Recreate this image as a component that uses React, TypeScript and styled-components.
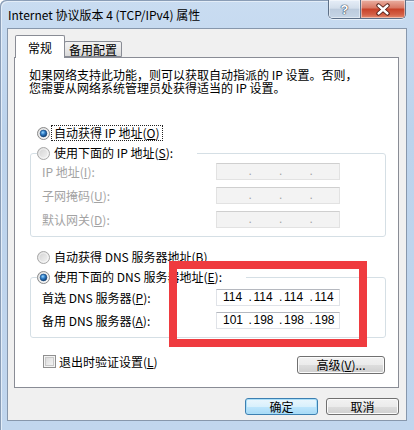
import { FC, ReactNode, useId } from "react";
import styled, { createGlobalStyle } from "styled-components";

const GlobalStyle = createGlobalStyle`
  * { box-sizing: border-box; }
  html, body { margin: 0; padding: 0; background: #ffffff; }
  body {
    font-family: "Noto Sans CJK SC", "Liberation Sans", sans-serif;
    font-size: 12px;
    color: #000;
  }
`;

const Window = styled.div`
  position: relative;
  width: 414px;
  height: 430px;
  display: flex;
  flex-direction: column;
  padding: 0 7px 9px 7px;
  background: linear-gradient(180deg, #c9dcf1 0%, #bcd3ec 30%, #c1d6ee 100%);
  border-top-left-radius: 6px;
  box-shadow: inset 1px 1px 0 #8a9db6, inset 2px 2px 0 #e3edf8;
  overflow: hidden;
`;

const TitleBar = styled.div`
  height: 28px;
  display: flex;
  align-items: flex-start;
`;

const Title = styled.div`
  padding: 7px 0 0 1px;
  line-height: 16px;
  font-size: 12px;
  color: #000;
`;

const Controls = styled.div`
  margin-left: auto;
  margin-right: 1px;
  display: flex;
  height: 19px;
  border: 1px solid #5d6f87;
  border-top: none;
  border-radius: 0 0 5px 5px;
  overflow: hidden;
  box-shadow: 0 1px 0 rgba(255, 255, 255, 0.6);
`;

const CtrlButton = styled.div<{ $kind: "help" | "close" }>`
  width: ${(p) => (p.$kind === "close" ? 45 : 31)}px;
  display: flex;
  align-items: center;
  justify-content: center;
  background: ${(p) =>
    p.$kind === "close"
      ? "linear-gradient(180deg, #eab0a2 0%, #d97a66 42%, #c8432a 52%, #d35f45 80%, #e48a6e 100%)"
      : "linear-gradient(180deg, #e6eef8 0%, #d3deeb 45%, #bccbdd 52%, #c6d5e6 100%)"};
  box-shadow: inset 0 0 0 1px rgba(255, 255, 255, 0.45);
  & + & {
    border-left: 1px solid #5d6f87;
  }
`;

const HelpGlyph = styled.span`
  font-family: "Liberation Sans", sans-serif;
  font-weight: bold;
  font-size: 13px;
  line-height: 13px;
  color: #ffffff;
  text-shadow: 0 0 1px #2f3f55, 0 0 1px #2f3f55, 0 0 1px #2f3f55;
`;

const Client = styled.div`
  flex: 1;
  display: flex;
  flex-direction: column;
  background: #f0f0f0;
  border: 1px solid #8797ac;
  padding: 6px 7px 0 6px;
`;

const TabStrip = styled.div`
  position: relative;
  z-index: 1;
  height: 23px;
  margin-bottom: -1px;
  padding-left: 1px;
  display: flex;
  align-items: flex-end;
`;

const Tab = styled.div<{ $active?: boolean }>`
  height: ${(p) => (p.$active ? 23 : 16)}px;
  width: ${(p) => (p.$active ? 50 : 58)}px;
  margin-left: ${(p) => (p.$active ? 0 : -1)}px;
  margin-bottom: ${(p) => (p.$active ? 0 : 1)}px;
  border: 1px solid #898c95;
  border-bottom: ${(p) => (p.$active ? "none" : "1px solid #898c95")};
  border-radius: 2px 2px 0 0;
  background: ${(p) =>
    p.$active ? "#ffffff" : "linear-gradient(180deg, #f2f2f2 0%, #e8e8e8 50%, #d9d9d9 100%)"};
  display: flex;
  justify-content: center;
  padding-top: ${(p) => (p.$active ? 4 : 0)}px;
  line-height: 15px;
  font-size: 12px;
`;

const Panel = styled.div`
  background: #ffffff;
  border: 1px solid #898c95;
  padding: 10px 12px 13px 14px;
  display: flex;
  flex-direction: column;
`;

const Description = styled.p`
  margin: 0;
  line-height: 13px;
  font-size: 12px;
  white-space: nowrap;
`;

const OptionRow = styled.div<{ $top: number }>`
  height: 16px;
  margin-top: ${(p) => p.$top}px;
  padding-left: 8px;
  display: flex;
  align-items: center;
  gap: 2px;
`;

const OptionText = styled.span<{ $focused?: boolean }>`
  line-height: 14px;
  padding: 0 2px;
  outline: ${(p) => (p.$focused ? "1px dotted #222" : "none")};
  white-space: nowrap;
`;

const Group = styled.fieldset<{ $top: number }>`
  margin: ${(p) => p.$top}px 0 0 1px;
  padding: 0;
  min-width: 0;
  border: 1px solid #d5dfe5;
  border-radius: 3px;
`;

const GroupLegend = styled.legend`
  margin-left: 6px;
  padding: 0 22px 0 0;
  height: 16px;
  display: flex;
  align-items: center;
  gap: 2px;
  background: #ffffff;
`;

const GroupRows = styled.div<{ $top: number; $gap: number }>`
  padding: ${(p) => p.$top}px 0 8px 11px;
  display: flex;
  flex-direction: column;
  gap: ${(p) => p.$gap}px;
`;

const FieldRow = styled.div`
  height: 17px;
  display: flex;
  align-items: center;
`;

const FieldLabel = styled.span<{ $disabled?: boolean }>`
  width: 174px;
  line-height: 17px;
  color: ${(p) => (p.$disabled ? "#a3a3a3" : "#000000")};
  white-space: nowrap;
`;

const IpBox = styled.div<{ $disabled?: boolean }>`
  width: 124px;
  height: 17px;
  display: flex;
  background: ${(p) => (p.$disabled ? "#f3f3f3" : "#ffffff")};
  border: 1px solid ${(p) => (p.$disabled ? "#e2e2e2" : "#e0e3e8")};
  border-top-color: ${(p) => (p.$disabled ? "#cfcfcf" : "#b5b8bf")};
  color: ${(p) => (p.$disabled ? "#a3a3a3" : "#000000")};
  font-family: "Liberation Sans", sans-serif;
  font-size: 12px;
  line-height: 15px;
`;

const Octet = styled.span`
  width: 31px;
  display: flex;
`;

const Dot = styled.span`
  width: 6px;
  padding-left: 1px;
  text-align: left;
`;

const OctetValue = styled.span`
  flex: 1;
  text-align: left;
`;

const BottomRow = styled.div`
  margin-top: 18px;
  margin-right: 1px;
  display: flex;
  align-items: flex-start;
  justify-content: space-between;
`;

const CheckRow = styled.label`
  margin: -1px 0 0 14px;
  height: 13px;
  display: flex;
  align-items: center;
  gap: 3px;
  line-height: 13px;
`;

const CheckBox = styled.span`
  width: 13px;
  height: 13px;
  border: 1px solid #8f8f8f;
  background: linear-gradient(135deg, #d4d4d4 0%, #ececec 60%, #f8f8f8 100%);
  box-shadow: inset 0 0 0 1px #f4f4f4, inset 0 0 0 2px #c9c9c9;
`;

const Button = styled.button<{ $width: number; $height: number; $default?: boolean }>`
  width: ${(p) => p.$width}px;
  height: ${(p) => p.$height}px;
  padding: 0;
  font-family: inherit;
  font-size: 12px;
  line-height: 14px;
  color: #000;
  border-radius: 3px;
  border: 1px solid ${(p) => (p.$default ? "#3c7fb1" : "#707070")};
  background: ${(p) =>
    p.$default
      ? "linear-gradient(180deg, #eaf6fd 0%, #d9f0fc 50%, #bee6fd 51%, #a7d9f5 100%)"
      : "linear-gradient(180deg, #f2f2f2 0%, #ebebeb 50%, #dddddd 51%, #cfcfcf 100%)"};
  box-shadow: inset 0 0 0 1px ${(p) => (p.$default ? "#a9def8" : "#fbfbfb")};
`;

const Footer = styled.div`
  margin-top: 10px;
  display: flex;
  justify-content: flex-end;
  gap: 8px;
`;

/* 说明用的红框标注 */
const Highlight = styled.div`
  position: absolute;
  left: 169px;
  top: 261px;
  width: 198px;
  height: 86px;
  border: 8px solid #ef3b3f;
  pointer-events: none;
`;

const Radio: FC<{ checked?: boolean }> = ({ checked }) => {
  const id = useId().replace(/:/g, "");
  return (
    <svg width="13" height="13" viewBox="0 0 13 13" style={{ flex: "none" }}>
      <defs>
        <linearGradient id={`f${id}`} x1="0" y1="0" x2="1" y2="1">
          <stop offset="0" stopColor="#cfcfcf" />
          <stop offset="1" stopColor="#f7f7f7" />
        </linearGradient>
        <radialGradient id={`d${id}`} cx="40%" cy="35%" r="70%">
          <stop offset="0" stopColor="#9ad8ff" />
          <stop offset="0.45" stopColor="#2f7cc6" />
          <stop offset="1" stopColor="#0c3564" />
        </radialGradient>
      </defs>
      <circle cx="6.5" cy="6.5" r="6" fill={`url(#f${id})`} stroke={checked ? "#8a8a8a" : "#a8a8a8"} />
      <circle cx="6.5" cy="6.5" r="4.6" fill="none" stroke="#ffffff" strokeOpacity="0.6" />
      {checked && <circle cx="6.5" cy="6.5" r="3.4" fill={`url(#d${id})`} stroke="#174a80" strokeWidth="0.6" />}
    </svg>
  );
};

const IpField: FC<{ value?: string[]; disabled?: boolean }> = ({ value, disabled }) => (
  <IpBox $disabled={disabled}>
    {[0, 1, 2, 3].map((i) => (
      <Octet key={i}>
        <Dot>{i > 0 ? "." : ""}</Dot>
        <OctetValue>{value ? value[i] : ""}</OctetValue>
      </Octet>
    ))}
  </IpBox>
);

const Field: FC<{ label: ReactNode; value?: string[]; disabled?: boolean }> = ({ label, value, disabled }) => (
  <FieldRow>
    <FieldLabel $disabled={disabled}>{label}</FieldLabel>
    <IpField value={value} disabled={disabled} />
  </FieldRow>
);

export default function App() {
  return (
    <>
      <GlobalStyle />
      <Window>
        <TitleBar>
          <Title>Internet 协议版本 4 (TCP/IPv4) 属性</Title>
          <Controls>
            <CtrlButton $kind="help">
              <HelpGlyph>?</HelpGlyph>
            </CtrlButton>
            <CtrlButton $kind="close">
              <svg width="16" height="13" viewBox="0 0 16 13">
                <path d="M3.5 2.5 L12.5 10.5 M12.5 2.5 L3.5 10.5" stroke="#4a1710" strokeWidth="4.2" strokeLinecap="round" />
                <path d="M3.5 2.5 L12.5 10.5 M12.5 2.5 L3.5 10.5" stroke="#ffffff" strokeWidth="2.4" strokeLinecap="round" />
              </svg>
            </CtrlButton>
          </Controls>
        </TitleBar>

        <Client>
          <TabStrip>
            <Tab $active>常规</Tab>
            <Tab>备用配置</Tab>
          </TabStrip>

          <Panel>
            <Description>
              如果网络支持此功能，则可以获取自动指派的 IP 设置。否则，
              <br />
              您需要从网络系统管理员处获得适当的 IP 设置。
            </Description>

            <OptionRow $top={31}>
              <Radio checked />
              <OptionText $focused>
                自动获得 IP 地址(<u>O</u>)
              </OptionText>
            </OptionRow>

            <Group $top={4}>
              <GroupLegend>
                <Radio />
                <OptionText>
                  使用下面的 IP 地址(<u>S</u>):
                </OptionText>
              </GroupLegend>
              <GroupRows $top={2} $gap={7}>
                <Field disabled label={<>IP 地址(<u>I</u>):</>} />
                <Field disabled label={<>子网掩码(<u>U</u>):</>} />
                <Field disabled label={<>默认网关(<u>D</u>):</>} />
              </GroupRows>
            </Group>

            <OptionRow $top={12}>
              <Radio />
              <OptionText>
                自动获得 DNS 服务器地址(<u>B</u>)
              </OptionText>
            </OptionRow>

            <Group $top={4}>
              <GroupLegend>
                <Radio checked />
                <OptionText>
                  使用下面的 DNS 服务器地址(<u>E</u>):
                </OptionText>
              </GroupLegend>
              <GroupRows $top={4} $gap={6}>
                <Field label={<>首选 DNS 服务器(<u>P</u>):</>} value={["114", "114", "114", "114"]} />
                <Field label={<>备用 DNS 服务器(<u>A</u>):</>} value={["101", "198", "198", "198"]} />
              </GroupRows>
            </Group>

            <BottomRow>
              <CheckRow>
                <CheckBox />
                <span>
                  退出时验证设置(<u>L</u>)
                </span>
              </CheckRow>
              <Button $width={88} $height={18}>
                高级(<u>V</u>)...
              </Button>
            </BottomRow>
          </Panel>

          <Footer>
            <Button $width={73} $height={17} $default>
              确定
            </Button>
            <Button $width={73} $height={17}>
              取消
            </Button>
          </Footer>
        </Client>

        <Highlight />
      </Window>
    </>
  );
}
